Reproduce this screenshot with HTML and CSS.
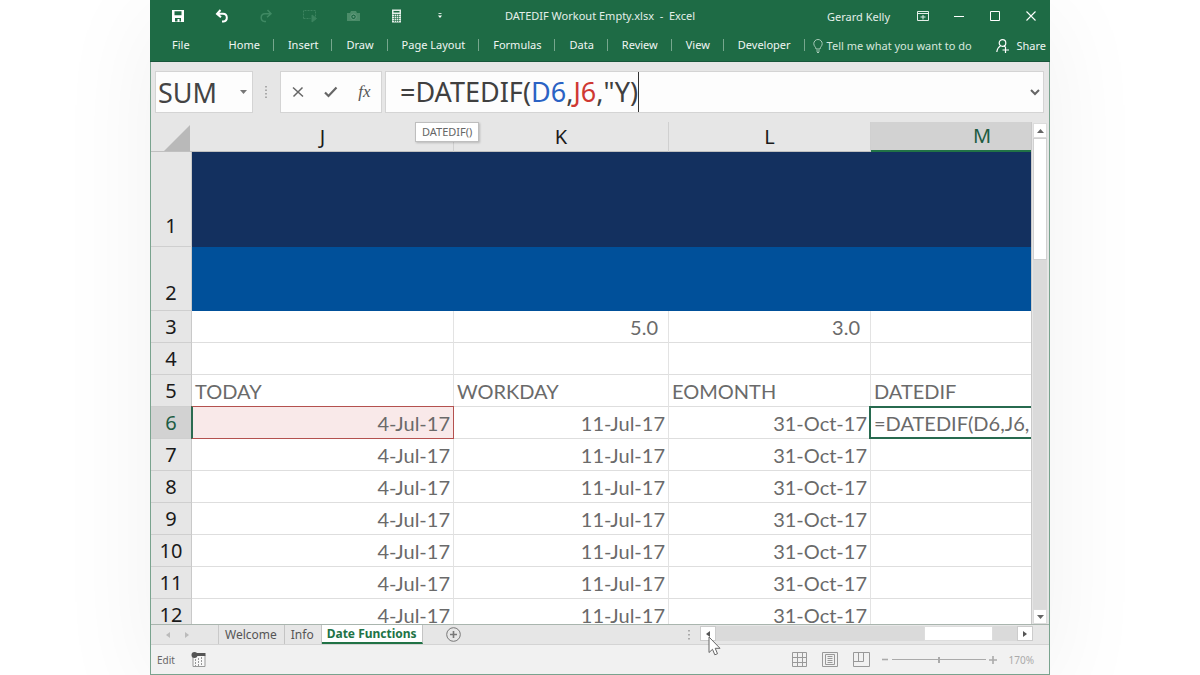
FILE: index.html
```html
<!DOCTYPE html>
<html lang="en">
<head>
<meta charset="utf-8">
<title>DATEDIF Workout Empty.xlsx - Excel</title>
<link rel="stylesheet" href="styles.css">
</head>
<body>
<main class="window">
  <header class="ribbon">
    <div class="titlebar">
      <div class="quick">
        <button aria-label="Save"><svg width="14" height="14" viewBox="0 0 14 14"><path fill-rule="evenodd" d="M1 1h12v12H1zM3.500 2.200h7v4h-7zM4 9h6v3.500H8.500V10H6.500v2.500H4z" fill="#fff"/></svg></button>
        <button aria-label="Undo"><svg width="14" height="14" viewBox="0 0 14 14" fill="none" stroke="#fff" stroke-width="2"><path d="M5.500 1L2 4.800l4 3.500M2.500 4.800h5.500c5 .2 5 7 .5 7.700H7"/></svg></button>
        <button aria-label="Redo"><svg width="14" height="14" viewBox="0 0 14 14" fill="none" stroke="#3f8963" stroke-width="1.500"><path d="M8.500 1L12 4.800l-4 3.500M11.500 4.800H6C1 5 1 11.800 5.500 12.500H7"/></svg></button>
        <button aria-label="Run selection"><svg width="16" height="14" viewBox="0 0 16 14" fill="none" stroke="#3b835e"><path d="M1.500 9.500v-8h12v6M1.500 9.500h7" stroke-dasharray="2 1"/><path d="M10 6v7l4.500-3.500z" fill="#3b835e"/></svg></button>
        <button aria-label="Camera"><svg width="15" height="12" viewBox="0 0 15 12"><path d="M1 3h3l1-2h5l1 2h3v8H1z" fill="#4b8c69"/><circle cx="7.500" cy="6.800" r="2.800" fill="#1e6b45" stroke="#6a9f83"/><circle cx="7.500" cy="6.800" r="1" fill="#6a9f83"/></svg></button>
        <button aria-label="Calculator"><svg width="11" height="14" viewBox="0 0 11 14"><path d="M1 .5h9v13H1z" fill="#e4efe9"/><path d="M2.500 2h6v1.500h-6z" fill="#1e6b45"/><path d="M1.500 5.500h8M1.500 7.500h8M1.500 9.500h8M1.500 11.500h8M3.500 5v8M5.500 5v8M7.500 5v8" stroke="#1e6b45" stroke-width=".6"/></svg></button>
        <button aria-label="Customize toolbar"><svg width="6" height="6" viewBox="0 0 6 6"><path d="M1.500.500h3" stroke="#cfe0d7"/><path d="M1 2.500h4L3 5z" fill="#fff"/></svg></button>
      </div>
      <h1 class="doc-title">DATEDIF Workout Empty.xlsx&nbsp; -&nbsp; Excel</h1>
      <div class="controls">
        <span class="user">Gerard Kelly</span>
        <button aria-label="Ribbon display options"><svg width="12" height="10" viewBox="0 0 12 10" fill="none" stroke="#e4efe9"><path d="M.5.500h11v9H.500zM.500 2.500h11M6 8.500V4M3.500 6h5"/></svg></button>
        <button aria-label="Minimize"><svg width="10" height="10" viewBox="0 0 10 10" stroke="#fff"><path d="M0 5.500h10"/></svg></button>
        <button aria-label="Maximize"><svg width="10" height="10" viewBox="0 0 10 10" fill="none" stroke="#fff"><path d="M.5.500h9v9h-9z"/></svg></button>
        <button aria-label="Close"><svg width="10" height="10" viewBox="0 0 10 10" stroke="#fff" stroke-width="1.100"><path d="M.5.500l9 9M9.500.500l-9 9"/></svg></button>
      </div>
    </div>
    <nav class="tabs" aria-label="Ribbon">
      <button class="file">File</button>
      <button>Home</button><button>Insert</button><button>Draw</button><button>Page Layout</button><button>Formulas</button><button>Data</button><button>Review</button><button>View</button><button>Developer</button>
      <button class="tell"><svg width="10" height="14" viewBox="0 0 10 14" fill="none" stroke="#a9cbb9"><path d="M3 10C3 8 .8 7.200.8 4.700a4.200 4.200 0 0 1 8.400 0C9.200 7.200 7 8 7 10zM3.200 12h3.600M4 13.500h2"/></svg>Tell me what you want to do</button>
      <button class="share"><svg width="14" height="14" viewBox="0 0 14 14" fill="none" stroke="#fff" stroke-width="1.200"><circle cx="6.500" cy="4" r="3.300"/><path d="M4.500 7C2.500 8 1.200 10 .8 13M8 7l1.500 1M9.500 8v6M6.500 11H13"/></svg>Share</button>
    </nav>
  </header>

  <section class="formula-row">
    <div class="namebox">
      <input type="text" value="SUM" aria-label="Name box">
      <button aria-label="Name list"><svg width="7" height="4" viewBox="0 0 7 4"><path d="M0 0h7L3.500 4z" fill="#777"/></svg></button>
    </div>
    <svg class="grip" width="2" height="12" viewBox="0 0 2 12" fill="#aaa"><path d="M0 0h2v1.500H0zM0 3.500h2V5H0zM0 7h2v1.500H0zM0 10.500h2V12H0z"/></svg>
    <div class="actions">
      <button aria-label="Cancel"><svg width="12" height="12" viewBox="0 0 12 12" stroke="#666" stroke-width="1.500"><path d="M1 1.500l10 9M10.500 1.500L1.500 10.500"/></svg></button>
      <button aria-label="Enter"><svg width="14" height="12" viewBox="0 0 14 12" fill="none" stroke="#666" stroke-width="2.200"><path d="M1 6.500L4.500 10 12.500 1.500"/></svg></button>
      <button class="fx" aria-label="Insert function">fx</button>
    </div>
    <div class="formula">
      <div class="formula-text" contenteditable="true" role="textbox" aria-label="Formula bar" spellcheck="false">=DATEDIF(<span class="ref-blue">D6</span>,<span class="ref-red">J6</span>,"Y)</div>
      <button aria-label="Expand formula bar"><svg width="10" height="7" viewBox="0 0 10 7" fill="none" stroke="#666" stroke-width="2"><path d="M1 1l4 4 4-4"/></svg></button>
    </div>
    <div class="hint" role="tooltip">DATEDIF()</div>
  </section>

  <section class="sheet">
    <div class="grid">
      <table>
        <colgroup><col class="c-num"><col class="c-j"><col class="c-k"><col class="c-l"><col class="c-m"></colgroup>
        <thead><tr><th class="corner"><svg width="27" height="27" viewBox="0 0 27 27"><path d="M27 1v26H1z" fill="#b9b9b9"/></svg></th><th>J</th><th>K</th><th>L</th><th class="active">M</th></tr></thead>
        <tbody>
          <tr class="band navy"><th>1</th><td></td><td></td><td></td><td></td></tr>
          <tr class="band blue"><th>2</th><td></td><td></td><td></td><td></td></tr>
          <tr><th>3</th><td></td><td class="dec">5.0</td><td class="dec">3.0</td><td></td></tr>
          <tr><th>4</th><td></td><td></td><td></td><td></td></tr>
          <tr class="labels"><th>5</th><td>TODAY</td><td>WORKDAY</td><td>EOMONTH</td><td>DATEDIF</td></tr>
          <tr><th class="active">6</th><td class="marked">4-Jul-17</td><td>11-Jul-17</td><td>31-Oct-17</td><td class="editing">=DATEDIF(D6,J6,</td></tr>
          <tr><th>7</th><td>4-Jul-17</td><td>11-Jul-17</td><td>31-Oct-17</td><td></td></tr>
          <tr><th>8</th><td>4-Jul-17</td><td>11-Jul-17</td><td>31-Oct-17</td><td></td></tr>
          <tr><th>9</th><td>4-Jul-17</td><td>11-Jul-17</td><td>31-Oct-17</td><td></td></tr>
          <tr><th>10</th><td>4-Jul-17</td><td>11-Jul-17</td><td>31-Oct-17</td><td></td></tr>
          <tr><th>11</th><td>4-Jul-17</td><td>11-Jul-17</td><td>31-Oct-17</td><td></td></tr>
          <tr><th>12</th><td>4-Jul-17</td><td>11-Jul-17</td><td>31-Oct-17</td><td></td></tr>
        </tbody>
      </table>
    </div>
    <div class="vscroll">
      <button aria-label="Scroll up"><svg width="7" height="4" viewBox="0 0 7 4"><path d="M0 4h7L3.500 0z" fill="#666"/></svg></button>
      <div class="vthumb"></div>
      <div class="vtrack"></div>
      <button aria-label="Scroll down"><svg width="7" height="4" viewBox="0 0 7 4"><path d="M0 0h7L3.500 4z" fill="#666"/></svg></button>
    </div>
  </section>

  <footer>
    <div class="sheetbar">
      <div class="arrows">
        <button aria-label="Previous sheet"><svg width="4" height="6" viewBox="0 0 4 6"><path d="M4 0v6L0 3z" fill="#bbb"/></svg></button>
        <button aria-label="Next sheet"><svg width="4" height="6" viewBox="0 0 4 6"><path d="M0 0v6l4-3z" fill="#bbb"/></svg></button>
      </div>
      <button class="sheet-tab">Welcome</button>
      <button class="sheet-tab">Info</button>
      <button class="sheet-tab current">Date Functions</button>
      <button class="add" aria-label="New sheet"><svg width="15" height="15" viewBox="0 0 15 15" fill="none" stroke="#777"><circle cx="7.500" cy="7.500" r="6.800"/><path d="M7.500 4v7M4 7.500h7" stroke-width="1.600"/></svg></button>
      <svg class="grip tabs-grip" width="2" height="12" viewBox="0 0 2 12" fill="#aaa"><path d="M0 1h2v1.500H0zM0 5h2v1.500H0zM0 9h2v1.500H0z"/></svg>
      <div class="hscroll">
        <button class="left" aria-label="Scroll left"><svg width="4" height="6" viewBox="0 0 4 6"><path d="M4 0v6L0 3z" fill="#555"/></svg></button>
        <div class="htrack"></div><div class="hthumb"></div><div class="hrest"></div>
        <button aria-label="Scroll right"><svg width="4" height="6" viewBox="0 0 4 6"><path d="M0 0v6l4-3z" fill="#555"/></svg></button>
        <svg class="pointer" width="14" height="20" viewBox="0 0 14 20"><path d="M1 1v15.500l3.500-3.200 2.300 5.500 2.700-1.100-2.300-5.400H12z" fill="#fff" stroke="#666"/></svg>
      </div>
    </div>
    <div class="status">
      <span class="mode">Edit</span>
      <button aria-label="Record macro"><svg width="15" height="15" viewBox="0 0 15 15"><path d="M2 3.500h12v11H2z" fill="#f8f8f8" stroke="#999"/><path d="M6 1h8.500v3H6z" fill="#555"/><circle cx="3.500" cy="3" r="3" fill="#555"/><path d="M4.500 7v7M7.500 6v8M10.500 5v9" stroke="#999" stroke-dasharray="2 1"/></svg></button>
      <div class="views">
        <button aria-label="Normal view"><svg width="15" height="15" viewBox="0 0 15 15" fill="none" stroke="#999"><path d="M.5.500h14v14H.500zM5.500.500v14M10.500.500v14M.500 5.500h14M.500 10.500h14"/></svg></button>
        <button aria-label="Page layout view"><svg width="16" height="15" viewBox="0 0 16 15" fill="none" stroke="#999"><path d="M.5.500h15v14H.500zM3.500 2.500h9v10h-9zM5.500 4.500h5M5.500 6.500h5M5.500 8.500h5M5.500 10.500h5"/></svg></button>
        <button aria-label="Page break preview"><svg width="17" height="15" viewBox="0 0 17 15" fill="none" stroke="#999"><path d="M.5.500h16v14H.500zM.500 9.500h10V.500M5.500.500v9"/></svg></button>
      </div>
      <button class="minus" aria-label="Zoom out"><svg width="7" height="7" viewBox="0 0 7 7" stroke="#aaa" stroke-width="1.600"><path d="M0 3.500h6"/></svg></button>
      <input class="zoom" type="range" min="0" max="100" value="50" aria-label="Zoom">
      <button aria-label="Zoom in"><svg width="8" height="8" viewBox="0 0 8 8" stroke="#aaa" stroke-width="1.600"><path d="M0 4h8M4 0v8"/></svg></button>
      <span class="percent">170%</span>
    </div>
  </footer>
</main>
</body>
</html>
```
FILE: styles.css
```css
* { box-sizing: border-box; }
body { margin: 0; background: #fff; font-family: "Noto Sans", "Open Sans", sans-serif; overflow: hidden; }
button, input { font: inherit; color: inherit; background: none; border: 0; padding: 0; margin: 0; }
button { display: inline-flex; align-items: center; justify-content: center; }
svg { display: block; flex: none; }

.window {
  display: flex; flex-direction: column;
  width: 75vw; height: 100vh; margin: 0 auto;
  background: #e6e6e6; border: 1px solid #79a38e; border-top: 0;
  box-shadow: 0 16px 96px rgba(0, 0, 0, .06);
}

.ribbon { background: #1e6b45; color: #fff; border-bottom: 1px solid #17553a; margin: 0 -1px; font-size: 11px; }
.titlebar { display: grid; grid-template-columns: 1fr auto 1fr; align-items: center; height: 30px; }
.quick { display: flex; padding-left: 6px; }
.quick button { width: 44px; height: 30px; }
.quick button:nth-child(n+5) { width: 43px; }
.doc-title { margin: 0; font-size: 11px; font-weight: 400; line-height: 32px; color: #e4efe9; }
.controls { display: flex; justify-content: flex-end; align-items: center; height: 26px; padding-right: 1px; color: #e4efe9; }
.controls button { width: 36px; height: 26px; }
.user { margin-right: 15px; }

.tabs { display: flex; align-items: center; height: 31px; padding: 0 4px 2px 0; color: #f0f6f3; white-space: nowrap; }
.tabs button { padding: 0 14px; line-height: 14px; position: relative; }
.tabs button:not(.file):not(.tell):not(.share)::after {
  content: ""; position: absolute; right: 0; top: 1px; width: 1px; height: 12px; background: #77a78e;
}
.tabs .file { padding: 0 25px 0 22px; }
.tabs .tell { padding: 2px 0 0 8px; gap: 4px; color: #d5e6dc; }
.tabs .share { padding: 2px 0 0; gap: 6px; margin-left: auto; }

.formula-row { display: flex; align-items: center; position: relative; height: 60px; flex: none; padding: 0 5px 0 4px; }
.namebox, .actions, .formula { display: flex; align-items: center; height: 42px; background: #fdfdfd; border: 1px solid #d4d4d4; }
.namebox { width: 98px; padding-right: 5px; }
.namebox input { flex: 1; min-width: 0; padding-left: 2px; font-size: 27px; color: #444; }
.grip { margin: 0 13px 0 12px; }
.actions { width: 102px; margin-right: 3px; justify-content: space-around; }
.actions button { width: 32px; height: 32px; }
.actions .fx { font: italic 17px "Liberation Serif", serif; color: #555; }
.formula { flex: 1; justify-content: space-between; padding: 0 3px 0 14px; }
.formula-text { font-size: 27px; line-height: 40px; color: #404040; border-right: 1px solid #333; outline: 0; white-space: nowrap; }
.ref-blue { color: #2a62c4; }
.ref-red { color: #cf3832; }
.hint { position: absolute; left: 264px; top: 60px; z-index: 2; padding: 0 6px; background: #fff; border: 1px solid #bebebe; box-shadow: 1px 1px 2px rgba(0, 0, 0, .2); font-size: 11px; line-height: 18px; color: #666; }

.sheet { display: flex; flex: 1; min-height: 0; }
.grid { flex: 1; min-width: 0; overflow: hidden; background: #fff; }
table { table-layout: fixed; width: 943px; border-collapse: separate; border-spacing: 0; font-family: Lato, sans-serif; font-size: 20px; color: #6a6a6a; }
.c-num { width: 41px; }
.c-j { width: 262px; }
.c-k { width: 215px; }
.c-l { width: 202px; }
.c-m { width: 223px; }
th { font-family: "Noto Sans", sans-serif; font-size: 20px; font-weight: 400; color: #1a1a1a; background: #e6e6e6; padding: 0; border-right: 1px solid #c9c9c9; border-bottom: 1px solid #cfcfcf; vertical-align: bottom; line-height: 29px; }
thead th { height: 30px; border-right-color: #d0d0d0; border-bottom-color: #c0c0c0; }
.corner svg { margin-left: auto; }
thead .corner { border-right: 0; padding-right: 2px; }
thead .active { background: #d2d2d2; color: #205c42; border-bottom: 2px solid #217346; line-height: 28px; }
tbody .active { background: #d2d2d2; color: #205c42; }
tbody th { line-height: 30px; }
td { height: 32px; padding: 1px 3px 0; border-right: 1px solid #e3e3e3; border-bottom: 1px solid #dedede; line-height: 30px; text-align: right; white-space: nowrap; }
.band th { padding-bottom: 5px; }
.band td { border: 0; }
.navy td { height: 95px; background: #13305f; }
.blue td { height: 64px; background: #00509a; }
.blue th { padding-bottom: 2px; }
td.dec { padding-right: 10px; }
.labels td { text-align: left; }
.marked, .editing { position: relative; }
.marked { background: #f9e9e9; }
.marked::after, .editing::after { content: ""; position: absolute; inset: -1px; border: 1px solid #b4514f; }
.marked::after { border-left: 2px solid #2b6b50; }
td.editing { text-align: left; }
.editing::after { inset: -1px -1px -1px -2px; border: 2px solid #276a4f; }

.vscroll { display: flex; flex-direction: column; width: 18px; padding: 1px 2px 0 1px; border-left: 1px solid #c9c9c9; background: #e6e6e6; }
.vscroll button { height: 15px; background: #fff; border: 1px solid #dcdcdc; }
.vthumb { flex: 25 1 0; background: #fff; border: 1px solid #d0d0d0; }
.vtrack { flex: 73 1 0; background: #dadada; }

.sheetbar { display: flex; align-items: stretch; height: 21px; border-top: 1px solid #a9b5ae; border-bottom: 1px solid #d4d4d4; font-size: 12px; color: #555; }
.arrows { display: flex; align-items: center; gap: 15px; width: 68px; padding-left: 15px; border-right: 1px solid #c9c9c9; }
.sheet-tab { padding: 0 7px 0 6px; border-right: 1px solid #c4c4c4; line-height: 18px; }
.sheet-tab.current { padding: 0 5px; background: #fff; color: #217346; font-weight: 700; border-bottom: 2px solid #217346; line-height: 16px; }
.add { margin-left: 23px; }
.tabs-grip { margin: 4px 10px 0 auto; }
.hscroll { display: flex; position: relative; flex: 0 0 333px; margin-right: 16px; padding: 1px 0 3px; }
.hscroll button { width: 16px; background: #fff; border: 1px solid #ccc; }
.htrack { flex: 209 1 0; background: #dadada; }
.hthumb { flex: 68 1 0; background: #fff; border: 1px solid #ddd; }
.hrest { flex: 24 1 0; background: #dadada; }
.pointer { position: absolute; left: 8px; top: 11px; z-index: 3; }

.status { display: flex; align-items: center; height: 29px; background: #f1f1f1; font-size: 10px; color: #666; padding: 0 15px 0 6px; }
.mode { margin-right: 16px; }
.views { display: flex; gap: 15px; margin-left: auto; }
.minus { margin-left: 12px; }
.zoom { appearance: none; width: 94px; height: 12px; margin: 0 3px; background: linear-gradient(#aaa, #aaa) center / 100% 1px no-repeat; }
.zoom::-webkit-slider-thumb { appearance: none; width: 2px; height: 6px; background: #aaa; }
.percent { margin-left: 12px; color: #aaa; }
```
